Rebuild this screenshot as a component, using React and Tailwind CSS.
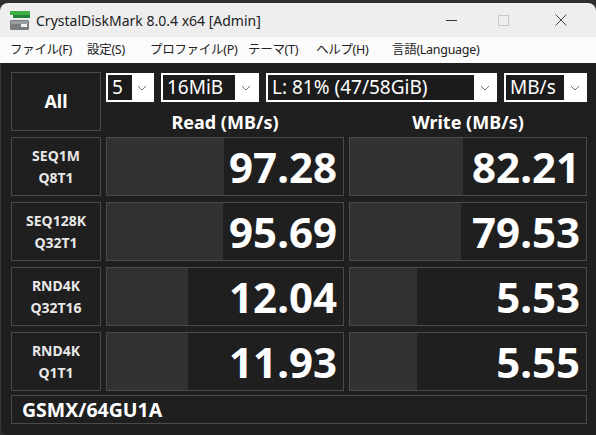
import React from "react";

const rows = [
  { l1: "SEQ1M", l2: "Q8T1", read: "97.28", rPct: 49.6, write: "82.21", wPct: 47.9 },
  { l1: "SEQ128K", l2: "Q32T1", read: "95.69", rPct: 49.2, write: "79.53", wPct: 47.2 },
  { l1: "RND4K", l2: "Q32T16", read: "12.04", rPct: 34.5, write: "5.53", wPct: 28.6 },
  { l1: "RND4K", l2: "Q1T1", read: "11.93", rPct: 34.5, write: "5.55", wPct: 28.6 },
];

// menu labels with the slot widths they take in the bar
const menu = [
  { t: "ファイル(F)", w: "w-[77px]" },
  { t: "設定(S)", w: "w-[63px]" },
  { t: "プロファイル(P)", w: "w-[98px]" },
  { t: "テーマ(T)", w: "w-[68px]" },
  { t: "ヘルプ(H)", w: "w-[76px]" },
  { t: "言語(Language)", w: "" },
];

function Chevron() {
  return (
    <svg width="10" height="6" viewBox="0 0 10 6" className="text-gray-500">
      <path d="M1 1 L5 5 L9 1" fill="none" stroke="currentColor" strokeWidth="1" />
    </svg>
  );
}

function Combo({ value, w, textW }) {
  return (
    <div className={`flex h-[29px] items-stretch border-2 border-white bg-white ${w}`}>
      <div className={`flex items-center bg-[#1b1b1b] pl-[4px] text-[19px] leading-none text-white ${textW}`}>{value}</div>
      <div className="flex flex-1 items-center justify-center">
        <Chevron />
      </div>
    </div>
  );
}

function Meter({ value, pct }) {
  return (
    <div className="relative flex h-[59px] items-center justify-end border border-[#4a4a4a] bg-[#1f1f1f] pr-[6px]">
      <div className="absolute inset-y-0 left-0 bg-[#323232]" style={{ width: `${pct}%` }} />
      <span className="relative text-[42px] font-bold leading-none text-white">{value}</span>
    </div>
  );
}

export default function App() {
  return (
    <div className="h-[435px] w-[596px] overflow-hidden bg-[#2e2e2e] pt-[3px]" style={{ fontFamily: '"Noto Sans", "Noto Sans CJK JP", sans-serif' }}>
      <div className="flex h-[432px] flex-col overflow-hidden rounded-t-lg rounded-bl-lg bg-[#1f1f1f]">
        {/* title bar */}
        <div className="flex h-[34px] items-center bg-[#eeeeee]">
          <svg width="22" height="21" viewBox="0 0 22 21" className="ml-[9px]">
            <rect x="1" y="1" width="20" height="4" fill="#3fae45" />
            <rect x="4" y="5" width="17" height="3" fill="#23823a" />
            <rect x="1" y="10" width="19" height="10" rx="1.5" fill="#7a7d80" />
            <rect x="2" y="11" width="17" height="3" fill="#9a9da0" />
            <rect x="12" y="14" width="6" height="3" fill="#f2f2f2" />
          </svg>
          <span className="ml-[5px] text-[14px] text-[#222]">CrystalDiskMark 8.0.4 x64 [Admin]</span>
          <div className="ml-auto flex items-center">
            <div className="flex w-[46px] justify-center">
              <div className="h-px w-[11px] bg-[#333]" />
            </div>
            <div className="flex w-[58px] justify-center">
              <div className="h-[11px] w-[11px] border border-[#c8c8c8]" />
            </div>
            <div className="mr-[6px] flex w-[58px] justify-center">
              <svg width="12" height="12" viewBox="0 0 12 12">
                <path d="M0.5 0.5 L11.5 11.5 M11.5 0.5 L0.5 11.5" stroke="#444" strokeWidth="1" />
              </svg>
            </div>
          </div>
        </div>

        {/* menu bar */}
        <div className="flex h-[26px] items-center bg-[#fbfbfb] pl-[10px] text-[12.5px] tracking-[-0.3px] text-[#222]">
          {menu.map((m) => (
            <span key={m.t} className={`shrink-0 ${m.w}`}>{m.t}</span>
          ))}
        </div>

        {/* main */}
        <div className="flex flex-1 flex-col border-l border-[#3a3a3a] pl-[10px] pt-[9px]">
          <div className="grid grid-cols-[90px_238px_238px] gap-x-[5px] gap-y-[6px]">
            <div className="flex h-[59px] items-center justify-center border border-[#4a4a4a] text-[18px] font-bold text-white">All</div>
            <div className="col-span-2 flex flex-col">
              <div className="mt-px flex gap-[7px]">
                <Combo value="5" w="w-[48px]" textW="w-[24px]" />
                <Combo value="16MiB" w="w-[98px]" textW="w-[72px]" />
                <Combo value="L: 81% (47/58GiB)" w="w-[231px]" textW="w-[206px]" />
                <Combo value="MB/s" w="w-[83px]" textW="w-[58px]" />
              </div>
              <div className="grid grid-cols-2 gap-x-[5px] pt-[11px] text-center text-[18px] font-bold leading-none text-white">
                <span>Read (MB/s)</span>
                <span>Write (MB/s)</span>
              </div>
            </div>

            {rows.map((r, i) => (
              <React.Fragment key={i}>
                <div className="flex h-[59px] flex-col items-center justify-center gap-[4px] border border-[#4a4a4a] text-[14px] font-bold leading-[18px] text-[#e8e8e8]">
                  <span>{r.l1}</span>
                  <span>{r.l2}</span>
                </div>
                <Meter value={r.read} pct={r.rPct} />
                <Meter value={r.write} pct={r.wPct} />
              </React.Fragment>
            ))}
          </div>
          <div className="mt-[4px] flex h-[29px] w-[576px] items-center border border-[#4a4a4a] pl-[10px] text-[19.5px] font-bold text-white">
            GSMX/64GU1A
          </div>
        </div>
      </div>
    </div>
  );
}
